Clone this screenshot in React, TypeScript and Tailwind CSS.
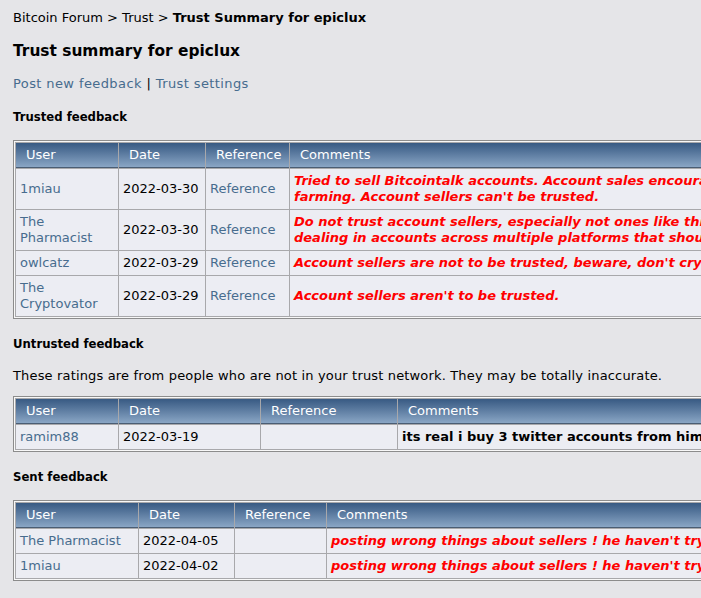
import { ReactNode } from 'react'

interface Row {
  user: ReactNode
  date: string
  reference?: boolean
  comment: ReactNode
  tone: 'negative' | 'neutral'
}

interface FeedbackTableProps {
  widths: [string, string, string, string]
  tableWidth: string
  rows: Row[]
}

const link = 'text-[#476c8e]'

function FeedbackTable({ widths, tableWidth, rows }: FeedbackTableProps) {
  return (
    <div className="inline-block border border-[#8c8c8c] bg-[#f8f8f8] p-px">
      <table className={`table-fixed border-separate border-spacing-[1px] bg-[#a8a8ab] ${tableWidth}`}>
        <colgroup>
          {widths.map((w, i) => (
            <col key={i} className={w} />
          ))}
        </colgroup>
        <thead>
          <tr className="h-[25px]">
            {['User', 'Date', 'Reference', 'Comments'].map((h) => (
              <th
                key={h}
                className="border-b border-[#4a5d74] bg-gradient-to-b from-[#385a83] to-[#8aa6c5] pb-px pl-[10px] text-left align-middle font-normal text-white"
              >
                {h}
              </th>
            ))}
          </tr>
        </thead>
        <tbody>
          {rows.map((r, i) => (
            <tr key={i}>
              <td className={`bg-[#ecedf3] px-1 py-1 align-middle ${link}`}>{r.user}</td>
              <td className="bg-[#ecedf3] px-1 py-1 align-middle whitespace-nowrap text-black">{r.date}</td>
              <td className={`bg-[#ecedf3] px-1 py-1 align-middle ${link}`}>{r.reference ? 'Reference' : ''}</td>
              <td
                className={`bg-[#ecedf3] px-1 py-1 align-middle whitespace-nowrap font-bold ${
                  r.tone === 'negative' ? 'italic text-[#ff0000]' : 'text-black'
                }`}
              >
                {r.comment}
              </td>
            </tr>
          ))}
        </tbody>
      </table>
    </div>
  )
}

const trusted: Row[] = [
  {
    user: '1miau',
    date: '2022-03-30',
    reference: true,
    tone: 'negative',
    comment: (
      <>
        Tried to sell Bitcointalk accounts. Account sales encourage account
        <br />
        farming. Account sellers can't be trusted.
      </>
    ),
  },
  {
    user: (
      <>
        The
        <br />
        Pharmacist
      </>
    ),
    date: '2022-03-30',
    reference: true,
    tone: 'negative',
    comment: (
      <>
        Do not trust account sellers, especially not ones like this who are
        <br />
        dealing in accounts across multiple platforms that should be avoided.
      </>
    ),
  },
  {
    user: 'owlcatz',
    date: '2022-03-29',
    reference: true,
    tone: 'negative',
    comment: "Account sellers are not to be trusted, beware, don't cry if you get scammed.",
  },
  {
    user: (
      <>
        The
        <br />
        Cryptovator
      </>
    ),
    date: '2022-03-29',
    reference: true,
    tone: 'negative',
    comment: "Account sellers aren't to be trusted.",
  },
]

const untrusted: Row[] = [
  {
    user: 'ramim88',
    date: '2022-03-19',
    tone: 'neutral',
    comment: 'its real i buy 3 twitter accounts from him',
  },
]

const sent: Row[] = [
  {
    user: 'The Pharmacist',
    date: '2022-04-05',
    tone: 'negative',
    comment: "posting wrong things about sellers ! he haven't try to buy anything",
  },
  {
    user: '1miau',
    date: '2022-04-02',
    tone: 'negative',
    comment: "posting wrong things about sellers ! he haven't try to buy anything",
  },
]

export default function App() {
  return (
    <div className="min-h-screen w-[701px] overflow-hidden bg-[#e5e5e8] px-[13px] pt-[10px] font-['Verdana','DejaVu_Sans',sans-serif] text-[13px] leading-4 text-black">
      <div>
        <span>Bitcoin Forum</span> &gt; <span>Trust</span> &gt;{' '}
        <span className="font-bold">Trust Summary for epiclux</span>
      </div>

      <h1 className="mt-[15px] text-[15.4px] leading-5 font-bold">Trust summary for epiclux</h1>

      <div className="mt-[15px] tracking-[0.4px]">
        <span className={link}>Post new feedback</span> | <span className={link}>Trust settings</span>
      </div>

      <h2 className="mt-[18px] text-[11.7px] leading-[14px] font-bold">Trusted feedback</h2>
      <div className="mt-[16px] w-[1200px]">
        <FeedbackTable
          widths={['w-[102px]', 'w-[86px]', 'w-[83px]', 'w-[700px]']}
          tableWidth="w-[976px]"
          rows={trusted}
        />
      </div>

      <h2 className="mt-[14px] text-[11.7px] leading-[14px] font-bold">Untrusted feedback</h2>
      <p className="mt-[17px] tracking-[0.16px]">
        These ratings are from people who are not in your trust network. They may be totally inaccurate.
      </p>
      <div className="mt-[12px] w-[1200px]">
        <FeedbackTable
          widths={['w-[102px]', 'w-[141px]', 'w-[136px]', 'w-[400px]']}
          tableWidth="w-[784px]"
          rows={untrusted}
        />
      </div>

      <h2 className="mt-[14px] text-[11.7px] leading-[14px] font-bold">Sent feedback</h2>
      <div className="mt-[16px] w-[1200px]">
        <FeedbackTable
          widths={['w-[122px]', 'w-[95px]', 'w-[91px]', 'w-[560px]']}
          tableWidth="w-[873px]"
          rows={sent}
        />
      </div>
    </div>
  )
}
